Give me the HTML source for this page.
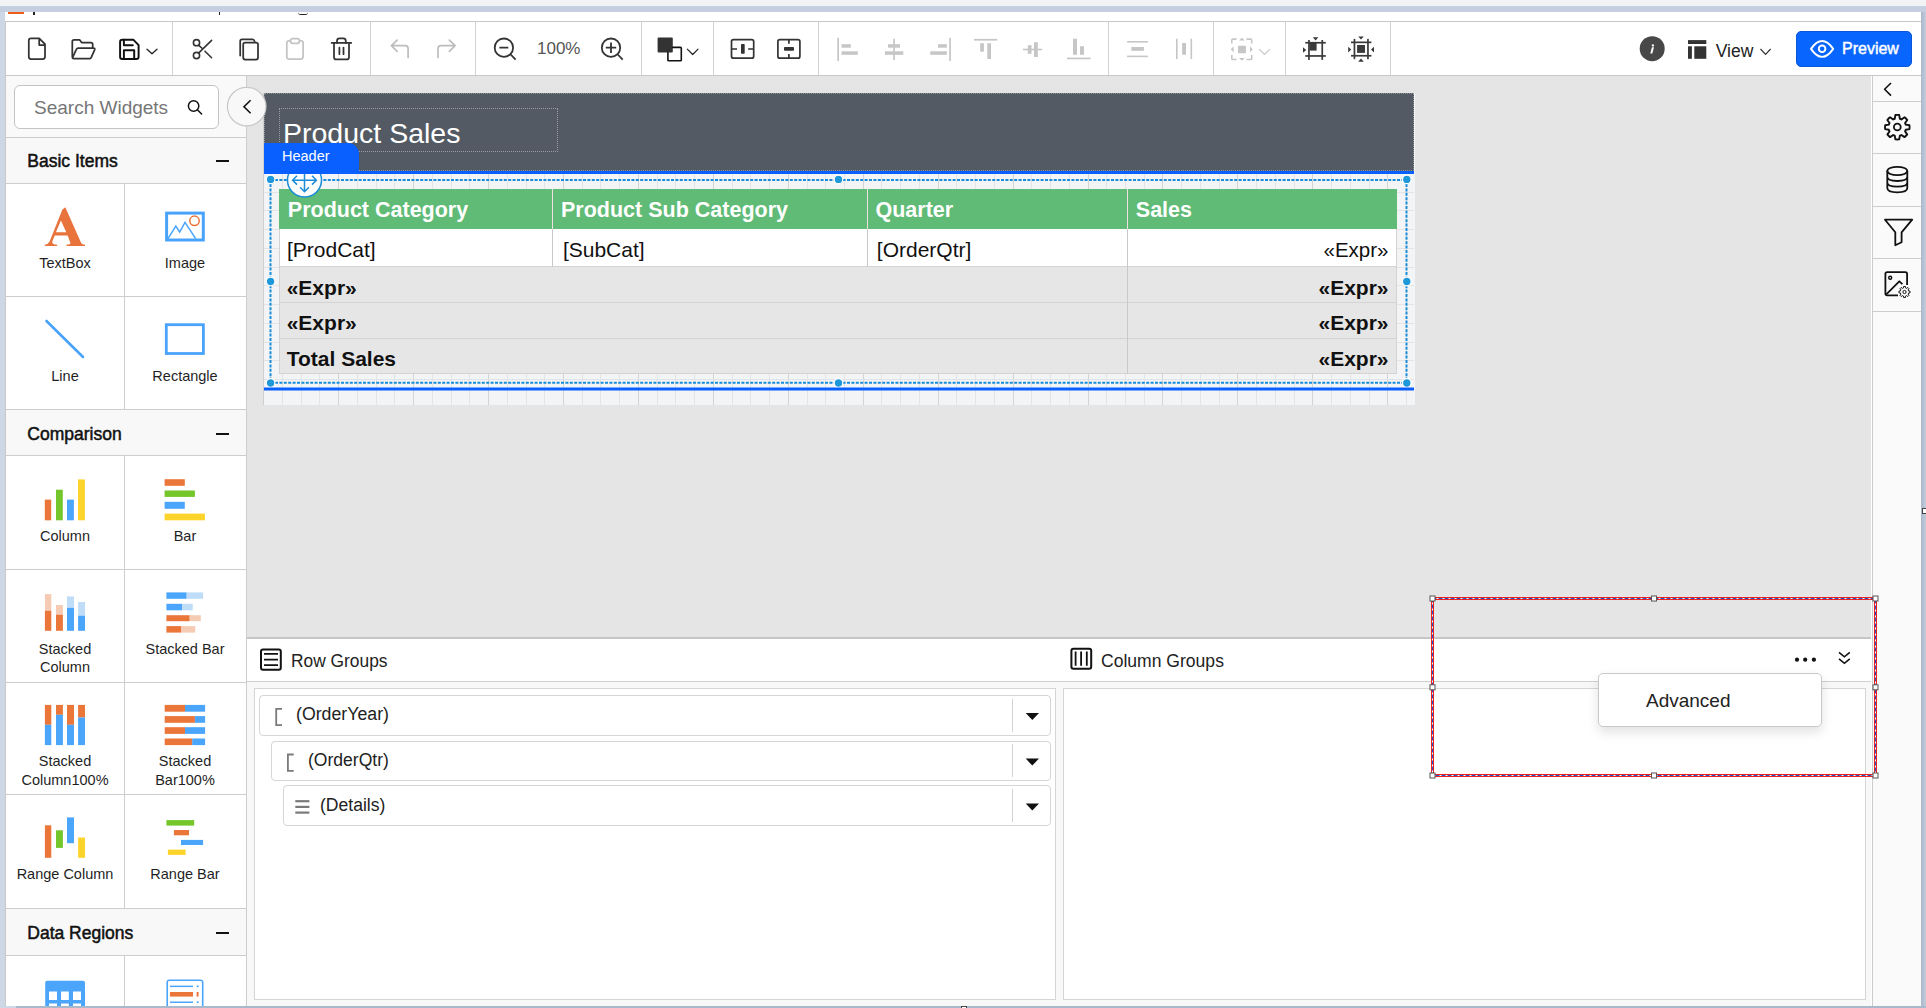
<!DOCTYPE html>
<html><head><meta charset="utf-8">
<style>
*{box-sizing:border-box;margin:0;padding:0}
html,body{width:1926px;height:1008px;overflow:hidden;background:#c4cedd;font-family:"Liberation Sans",sans-serif;color:#222;position:relative}
.a{position:absolute}
svg.o{position:absolute;left:0;top:0;width:1926px;height:1008px;overflow:visible}
.sep{position:absolute;top:22px;width:1px;height:53px;background:#d2d2d2}
.t{position:absolute;white-space:nowrap;line-height:normal}
.lb{position:absolute;white-space:nowrap;line-height:normal;font-size:14.5px;color:#1f1f1f;width:120px;text-align:center}
.sh{position:absolute;left:6px;width:240px;background:#f8f8f8;border-bottom:1px solid #cdcdcd}
.sht{position:absolute;left:27.3px;font-size:17.5px;font-weight:400;-webkit-text-stroke:0.5px #111;color:#111;white-space:nowrap;line-height:normal}
.mn{position:absolute;left:216px;width:13px;height:2px;background:#111}
</style></head><body>
<!-- top strip & app area -->
<div class="a" style="left:0;top:0;width:1926px;height:6px;background:#f2f3f5"></div>
<div class="a" style="left:0;top:6px;width:1926px;height:6px;background:#c5cfdf"></div>
<div class="a" style="left:0;top:12px;width:5px;height:996px;background:#cdd7e5"></div>
<div class="a" style="left:5px;top:12px;width:1916px;height:994px;background:#fff"></div>
<!-- cut-off title bar marks -->
<div class="a" style="left:8px;top:12px;width:16px;height:1.5px;background:#f05a1a"></div>
<div class="a" style="left:33px;top:12px;width:1.5px;height:3px;background:#222"></div>
<div class="a" style="left:218.5px;top:12px;width:1.5px;height:3px;background:#222"></div>
<div class="a" style="left:298px;top:12px;width:10px;height:3px;border-bottom:1.5px solid #222;border-radius:0 0 6px 6px"></div>

<!-- TOOLBAR -->
<div class="a" style="left:5px;top:21px;width:1916px;height:55px;background:#fff;border-top:1px solid #c8c8c8;border-bottom:1px solid #c8c8c8;border-left:1px solid #c8c8c8"></div>
<div class="sep" style="left:172px"></div>
<div class="sep" style="left:370px"></div>
<div class="sep" style="left:475px"></div>
<div class="sep" style="left:641px"></div>
<div class="sep" style="left:713px"></div>
<div class="sep" style="left:818px"></div>
<div class="sep" style="left:1108px"></div>
<div class="sep" style="left:1213px"></div>
<div class="sep" style="left:1285px"></div>
<div class="sep" style="left:1390px"></div>
<div class="t" style="left:537px;top:38.9px;font-size:17px;color:#555">100%</div>
<div class="t" style="left:1715.7px;top:41.4px;font-size:17.5px;color:#222">View</div>
<div class="a" style="left:1796px;top:31px;width:116px;height:35.5px;background:#0866ff;border:1px solid #0a55d8;border-radius:5px"></div>
<div class="t" style="left:1842px;top:40.3px;font-size:16px;color:#fff;-webkit-text-stroke:0.45px #fff">Preview</div>
<svg class="o" fill="none" stroke="#333" stroke-width="1.75" stroke-linecap="round" stroke-linejoin="round">
 <!-- new -->
 <path d="M31 38.3H39.2L45 44.2V56.8Q45 59 42.8 59H31Q28.8 59 28.8 56.8V40.5Q28.8 38.3 31 38.3Z M39.2 38.3V45H45"/>
 <!-- open -->
 <path d="M72.3 56.8V41.6Q72.3 39.8 74.1 39.8H79.6L81.6 42.6H90.9Q92.7 42.6 92.7 44.4V48.1"/>
 <path d="M72.6 57.6L76.2 49.6Q76.8 48.1 78.3 48.1H93.3Q95.3 48.1 94.6 49.9L91.3 57.3Q90.7 58.7 89.2 58.7H73.9Q72.1 58.7 72.6 57.6Z"/>
 <!-- save -->
 <g stroke="#111" stroke-width="1.95">
 <path d="M122.3 39.8H133.5L138.6 45.2V56.7Q138.6 58.9 136.4 58.9H122.3Q120.1 58.9 120.1 56.7V42Q120.1 39.8 122.3 39.8Z"/>
 <path d="M123.9 39.8V45.3H132.8 M123.9 58.9V50.3H134.2V58.9"/>
 </g>
 <path d="M147 49.3L152 53.8L157 49.3" stroke="#222" stroke-width="1.3"/>
 <!-- cut -->
 <circle cx="196.5" cy="42.7" r="3.1" stroke-width="1.6"/>
 <circle cx="196.5" cy="55.5" r="3.1" stroke-width="1.6"/>
 <path d="M198.8 52.9L211.6 40.4 M198.8 45.3L202.3 48.5 M205 51.2L211.6 57.7" stroke-width="1.6"/>
 <!-- copy -->
 <path d="M240.2 55.5V41.2Q240.2 39.4 242 39.4H252.5Q254.2 39.4 254.6 41.4"/>
 <rect x="243.2" y="42.6" width="14.8" height="17" rx="2"/>
 <!-- paste (disabled) -->
 <g stroke="#c4c4c4">
 <path d="M290 40.8H289Q286.8 40.8 286.8 43V56.8Q286.8 59 289 59H300.9Q303.1 59 303.1 56.8V43Q303.1 40.8 300.9 40.8H300"/>
 <rect x="290.6" y="38.5" width="8.8" height="4.8" rx="2"/>
 </g>
 <!-- delete -->
 <path d="M331.7 42.9H351.2" stroke-width="1.9"/>
 <path d="M337 42.9V41Q337 38.4 339.6 38.4H343.2Q345.8 38.4 345.8 41V42.9"/>
 <path d="M334 43V57.2Q334 59.4 336.2 59.4H346.8Q349 59.4 349 57.2V43"/>
 <path d="M339.4 47.6V54.2 M343.5 47.6V54.2"/>
 <!-- undo/redo disabled -->
 <g stroke="#bdbdbd" stroke-width="1.7">
 <path d="M397.1 40.1L391.4 45.7L397.1 51.3 M391.6 45.7H405Q408.1 45.7 408.1 48.8V57.5"/>
 <path d="M449.4 40.1L455.1 45.7L449.4 51.3 M454.9 45.7H441.1Q438 45.7 438 48.8V57.5"/>
 </g>
 <!-- zoom out / in -->
 <circle cx="503.9" cy="47.7" r="9.2" stroke-width="1.8"/>
 <path d="M510.7 54.5L515.6 59.6 M499.4 47.7H508.3" stroke-width="1.8" stroke-linecap="butt"/>
 <circle cx="611" cy="47.7" r="9.2" stroke-width="1.8"/>
 <path d="M617.8 54.5L622.7 59.6 M605.8 47.7H616.2 M611 42.5V52.9" stroke-width="1.8" stroke-linecap="butt"/>
 <!-- colors -->
 <rect x="657.6" y="37.6" width="15.2" height="14.8" rx="1" fill="#333" stroke="none"/>
 <path d="M672.8 47.4H680.5Q681.3 47.4 681.3 48.2V60Q681.3 60.8 680.5 60.8H668.7Q667.9 60.8 667.9 60V52.4" stroke="#111" stroke-width="1.6"/>
 <path d="M687.3 49.1L692.7 54.5L698 49.1" stroke="#222" stroke-width="1.2"/>
 <!-- insert column/row -->
 <rect x="731.5" y="39.6" width="22.2" height="18.6" rx="2" stroke-width="1.7"/>
 <path d="M731.5 49H737 M748.2 49H753.7" stroke-width="1.7" stroke-linecap="butt"/>
 <rect x="741" y="44" width="3.7" height="9.7" rx="0.8" fill="#333" stroke="none"/>
 <rect x="777.9" y="39.6" width="22" height="18.6" rx="2" stroke-width="1.7"/>
 <path d="M788.9 39.6V43.8 M788.9 54V58.2" stroke-width="1.7" stroke-linecap="butt"/>
 <rect x="784" y="47" width="10" height="3.8" rx="0.8" fill="#333" stroke="none"/>
</svg>
<!-- align icons (disabled) -->
<svg class="o" fill="#c6c6c6" stroke="none">
 <rect x="837.3" y="37.8" width="1.7" height="23.2"/><rect x="841.5" y="44.2" width="9.3" height="3.5"/><rect x="841.5" y="51.3" width="16.3" height="3.5"/>
 <rect x="893.2" y="38.8" width="1.7" height="21.2"/><rect x="888" y="44.2" width="12" height="3.5"/><rect x="885" y="51.3" width="18.3" height="3.5"/>
 <rect x="949.2" y="37.8" width="1.7" height="23.2"/><rect x="938" y="44.2" width="8.8" height="3.5"/><rect x="930.3" y="51.3" width="16.5" height="3.5"/>
 <rect x="974" y="38.9" width="23.3" height="1.7"/><rect x="980.2" y="43.2" width="3.7" height="8.5"/><rect x="987.3" y="43.2" width="3.7" height="15.8"/>
 <rect x="1023" y="48.7" width="19" height="1.6"/><rect x="1027.8" y="45.2" width="3.7" height="8.6"/><rect x="1034" y="42.2" width="3.8" height="14.8"/>
 <rect x="1067" y="57.6" width="23.6" height="1.7"/><rect x="1073" y="38.8" width="4" height="16"/><rect x="1080" y="46.2" width="4" height="8.6"/>
 <rect x="1127.1" y="41" width="20.8" height="1.6"/><rect x="1131.3" y="47" width="12.6" height="3.8"/><rect x="1127.1" y="55.6" width="20.8" height="1.6"/>
 <rect x="1176" y="38.7" width="1.6" height="20.3"/><rect x="1182.1" y="43" width="3.9" height="11.7"/><rect x="1190.5" y="38.7" width="1.6" height="20.3"/>
 <!-- select -->
 <path d="M1231.8 43.5V40.2Q1231.8 39.1 1232.9 39.1H1236.5 M1246.5 39.1H1250.6Q1251.7 39.1 1251.7 40.2V43.5 M1251.7 55V58.4Q1251.7 59.5 1250.6 59.5H1246.5 M1236.5 59.5H1232.9Q1231.8 59.5 1231.8 58.4V55" fill="none" stroke="#c6c6c6" stroke-width="1.6"/>
 <rect x="1238" y="45.8" width="7.9" height="7.5" rx="0.5"/>
 <path d="M1239 40.5L1241.9 37.8L1244.8 40.5Z M1239 58L1241.9 60.7L1244.8 58Z M1233.6 46.2L1230.8 49.3L1233.6 52.4Z M1250 46.2L1252.8 49.3L1250 52.4Z"/>
 <path d="M1259.2 49.1L1264.5 54.5L1270 49.1" fill="none" stroke="#c6c6c6" stroke-width="1.2"/>
</svg>
<!-- fit icons -->
<svg class="o" fill="#3a3a3a" stroke="none">
 <rect x="1305.3" y="41.9" width="20.5" height="1.7"/><rect x="1305.3" y="55.1" width="20.5" height="1.7"/>
 <rect x="1308.1" y="40" width="1.7" height="19.9"/><rect x="1321.4" y="40" width="1.7" height="19.9"/>
 <rect x="1309.5" y="43" width="7.1" height="7.6"/>
 <path d="M1312.8 37.3H1318.4L1315.6 40.6Z M1303 47.3V52.8L1306.2 50Z"/>
 <rect x="1351" y="41.5" width="20.4" height="1.7"/><rect x="1351" y="54.9" width="20.4" height="1.7"/>
 <rect x="1353.6" y="38.9" width="1.7" height="20.3"/><rect x="1367.1" y="38.9" width="1.7" height="20.3"/>
 <rect x="1357.1" y="45" width="7.9" height="7.9"/>
 <path d="M1358.2 36.4H1363.8L1361 39.6Z M1358.2 61.8H1363.8L1361 58.6Z M1348.2 46.8V52.4L1351.2 49.6Z M1374 46.8V52.4L1371 49.6Z"/>
</svg>
<!-- info / view / preview icons -->
<svg class="o">
 <circle cx="1652.2" cy="48.7" r="12.5" fill="#484848"/>
 <path d="M1652.9 44.2a1.2 1.2 0 1 0 0.01 0Z" fill="#fff"/>
 <path d="M1651.9 47.3H1654L1652.3 53.6H1650.3Z" fill="#fff"/>
 <rect x="1688" y="40.1" width="18.3" height="3.9" fill="#333"/>
 <rect x="1688" y="46.3" width="3.9" height="12.5" fill="#333"/>
 <rect x="1694.3" y="46.3" width="12" height="12.5" fill="#333"/>
 <path d="M1760.5 49L1765.6 54.3L1770.6 49" fill="none" stroke="#333" stroke-width="1.2"/>
 <path d="M1811 48.9Q1816.5 41 1822.1 41Q1827.7 41 1833.2 48.9Q1827.7 56.9 1822.1 56.9Q1816.5 56.9 1811 48.9Z" fill="none" stroke="#fff" stroke-width="1.9" stroke-linejoin="round"/>
 <circle cx="1822.1" cy="48.8" r="3.3" fill="none" stroke="#fff" stroke-width="1.9"/>
</svg>
<!-- LEFT PANEL -->
<div class="a" style="left:5px;top:76px;width:242px;height:930px;background:#f9f9f9;border-left:1px solid #c8c8c8;border-right:1px solid #cdcdcd"></div>
<div class="a" style="left:14px;top:84.5px;width:204.5px;height:44px;background:#fff;border:1px solid #c4c4c4;border-radius:6px"></div>
<div class="t" style="left:34px;top:96.8px;font-size:19px;color:#767676">Search Widgets</div>
<svg class="o" fill="none" stroke="#111" stroke-width="1.5">
 <circle cx="193.6" cy="106" r="5.2"/>
 <path d="M197.4 109.8L201.6 114" stroke-linecap="round"/>
</svg>
<div class="a" style="left:6px;top:137px;width:240px;height:1px;background:#cdcdcd"></div>
<!-- Basic items -->
<div class="sh" style="top:138px;height:46px"></div>
<div class="sht" style="top:151px">Basic Items</div>
<div class="mn" style="top:160px"></div>
<div class="a" style="left:6px;top:184px;width:240px;height:225px;background:#fff"></div>
<div class="a" style="left:124px;top:184px;width:1px;height:225px;background:#cdcdcd"></div>
<div class="a" style="left:6px;top:296px;width:240px;height:1px;background:#cdcdcd"></div>
<!-- Comparison -->
<div class="sh" style="top:409px;height:47px;border-top:1px solid #cdcdcd"></div>
<div class="sht" style="top:423.8px">Comparison</div>
<div class="mn" style="top:433px"></div>
<div class="a" style="left:6px;top:456px;width:240px;height:452px;background:#fff"></div>
<div class="a" style="left:124px;top:456px;width:1px;height:452px;background:#cdcdcd"></div>
<div class="a" style="left:6px;top:569px;width:240px;height:1px;background:#cdcdcd"></div>
<div class="a" style="left:6px;top:682px;width:240px;height:1px;background:#cdcdcd"></div>
<div class="a" style="left:6px;top:794px;width:240px;height:1px;background:#cdcdcd"></div>
<!-- Data Regions -->
<div class="sh" style="top:908px;height:48px;border-top:1px solid #cdcdcd"></div>
<div class="sht" style="top:922.5px">Data Regions</div>
<div class="mn" style="top:931.5px"></div>
<div class="a" style="left:6px;top:956px;width:240px;height:50px;background:#fff"></div>
<div class="a" style="left:124px;top:956px;width:1px;height:50px;background:#cdcdcd"></div>
<!-- labels -->
<div class="lb" style="left:5px;top:254.7px">TextBox</div>
<div class="lb" style="left:125px;top:254.7px">Image</div>
<div class="lb" style="left:5px;top:367.7px">Line</div>
<div class="lb" style="left:125px;top:367.7px">Rectangle</div>
<div class="lb" style="left:5px;top:528.1px">Column</div>
<div class="lb" style="left:125px;top:528.1px">Bar</div>
<div class="lb" style="left:5px;top:640.8px">Stacked</div>
<div class="lb" style="left:5px;top:659.2px">Column</div>
<div class="lb" style="left:125px;top:640.8px">Stacked Bar</div>
<div class="lb" style="left:5px;top:752.8px">Stacked</div>
<div class="lb" style="left:5px;top:771.7px">Column100%</div>
<div class="lb" style="left:125px;top:752.8px">Stacked</div>
<div class="lb" style="left:125px;top:771.7px">Bar100%</div>
<div class="lb" style="left:5px;top:865.8px">Range Column</div>
<div class="lb" style="left:125px;top:865.8px">Range Bar</div>
<!-- widget icons -->
<svg class="o" stroke="none">
 <!-- A -->
 <path fill="#e8743b" fill-rule="evenodd" d="M62.4 209.6L65.3 207.3L81.2 243.1Q82.2 244.6 85 244.8V246.1H66.5V244.8Q70.7 244.6 70.4 243L67.7 235.4H54.8L52.4 241.3Q51.4 244.5 57.1 244.8V246.1H44.8V244.8Q48.1 244.5 49.6 241.6Z M60.9 220.4L55.9 232.2H66.3Z"/>
 <!-- image -->
 <rect x="166.6" y="213.1" width="36.7" height="26.9" fill="none" stroke="#4aa3fb" stroke-width="3"/>
 <path d="M167.8 238.9L175.8 226.1L179.7 232L185 222.4L195.7 238.6" fill="none" stroke="#4aa3fb" stroke-width="1.5"/>
 <circle cx="194.5" cy="220.8" r="4.7" fill="none" stroke="#e8743b" stroke-width="1.5"/>
 <!-- line -->
 <path d="M46.5 321L83 357" stroke="#4aa3fb" stroke-width="2.6" stroke-linecap="round"/>
 <!-- rectangle -->
 <rect x="166.3" y="324.7" width="37.1" height="28.8" fill="none" stroke="#4aa3fb" stroke-width="2.8"/>
 <!-- column -->
 <rect x="44.8" y="499.6" width="6.4" height="20.7" fill="#ea7639"/>
 <rect x="56" y="489.7" width="6.8" height="30.6" fill="#74c62b"/>
 <rect x="67" y="499.6" width="6.9" height="20.7" fill="#4ba5fb"/>
 <rect x="78" y="479.4" width="6.9" height="40.9" fill="#fdd42c"/>
 <!-- bar -->
 <rect x="164.6" y="479.2" width="20.2" height="6.6" fill="#ea7639"/>
 <rect x="164.6" y="490.5" width="30.3" height="6.4" fill="#74c62b"/>
 <rect x="164.6" y="501.8" width="20.2" height="7" fill="#4ba5fb"/>
 <rect x="164.6" y="513.6" width="40.3" height="6.7" fill="#fdd42c"/>
 <!-- stacked column -->
 <rect x="44.9" y="594.1" width="6.4" height="16.7" fill="#f6cbb3"/><rect x="44.9" y="610.8" width="6.4" height="20" fill="#ea7639"/>
 <rect x="56" y="605" width="6.9" height="9.7" fill="#f6cbb3"/><rect x="56" y="614.7" width="6.9" height="16.1" fill="#ea7639"/>
 <rect x="67" y="596.4" width="7" height="11.4" fill="#bfdcf8"/><rect x="67" y="607.8" width="7" height="23" fill="#4ba5fb"/>
 <rect x="78.1" y="602" width="6.9" height="13.7" fill="#bfdcf8"/><rect x="78.1" y="615.7" width="6.9" height="15.1" fill="#4ba5fb"/>
 <!-- stacked bar -->
 <rect x="166.4" y="592.4" width="20.3" height="6.4" fill="#4ba5fb"/><rect x="186.7" y="592.4" width="16.4" height="6.4" fill="#bfdcf8"/>
 <rect x="166.4" y="603.8" width="15.9" height="6.5" fill="#4ba5fb"/><rect x="182.3" y="603.8" width="10.4" height="6.5" fill="#bfdcf8"/>
 <rect x="166.4" y="615.2" width="23.3" height="6" fill="#ea7639"/><rect x="189.7" y="615.2" width="11.1" height="6" fill="#f6cbb3"/>
 <rect x="166.4" y="626.1" width="14.6" height="6.5" fill="#ea7639"/><rect x="181" y="626.1" width="14.2" height="6.5" fill="#f6cbb3"/>
 <!-- stacked column 100 -->
 <rect x="44.9" y="704.9" width="6.4" height="19.9" fill="#ea7639"/><rect x="44.9" y="724.8" width="6.4" height="20.3" fill="#4ba5fb"/>
 <rect x="56" y="704.9" width="6.9" height="9.9" fill="#ea7639"/><rect x="56" y="714.8" width="6.9" height="30.3" fill="#4ba5fb"/>
 <rect x="67" y="704.9" width="7" height="19.9" fill="#ea7639"/><rect x="67" y="724.8" width="7" height="20.3" fill="#4ba5fb"/>
 <rect x="78.1" y="704.9" width="6.9" height="12.6" fill="#ea7639"/><rect x="78.1" y="717.5" width="6.9" height="27.6" fill="#4ba5fb"/>
 <!-- stacked bar 100 -->
 <rect x="164.7" y="704.9" width="20.3" height="6.8" fill="#ea7639"/><rect x="185" y="704.9" width="20.1" height="6.8" fill="#4ba5fb"/>
 <rect x="164.7" y="716.1" width="30.2" height="6.7" fill="#ea7639"/><rect x="194.9" y="716.1" width="10.2" height="6.7" fill="#4ba5fb"/>
 <rect x="164.7" y="727.2" width="20.3" height="6.7" fill="#ea7639"/><rect x="185" y="727.2" width="20.1" height="6.7" fill="#4ba5fb"/>
 <rect x="164.7" y="738.5" width="27.5" height="6.6" fill="#ea7639"/><rect x="192.2" y="738.5" width="12.9" height="6.6" fill="#4ba5fb"/>
 <!-- range column -->
 <rect x="44.9" y="825.3" width="6.4" height="32.5" fill="#ea7639"/>
 <rect x="56" y="830.3" width="6.9" height="17.6" fill="#74c62b"/>
 <rect x="67" y="817.4" width="7" height="25.8" fill="#4ba5fb"/>
 <rect x="78.1" y="837.5" width="6.9" height="20.3" fill="#fdd42c"/>
 <!-- range bar -->
 <rect x="166.4" y="820.1" width="27.8" height="5.5" fill="#74c62b"/>
 <rect x="173.9" y="830" width="15.1" height="5.3" fill="#ea7639"/>
 <rect x="181" y="839.9" width="22.1" height="5.1" fill="#4ba5fb"/>
 <rect x="167.9" y="849.6" width="17.7" height="5.3" fill="#fdd42c"/>
 <!-- table icon -->
 <path d="M47.2 980.7H83Q85 980.7 85 982.7V1010H45.2V982.7Q45.2 980.7 47.2 980.7Z" fill="#4ba5fb"/>
 <rect x="49" y="991.5" width="8" height="8.5" fill="#fff"/><rect x="61" y="991.5" width="7.8" height="8.5" fill="#fff"/><rect x="73" y="991.5" width="8" height="8.5" fill="#fff"/>
 <rect x="49" y="1003.5" width="8" height="8" fill="#fff"/><rect x="61" y="1003.5" width="7.8" height="8" fill="#fff"/><rect x="73" y="1003.5" width="8" height="8" fill="#fff"/>
 <!-- list icon -->
 <path d="M167.2 1012V982.5Q167.2 980.3 169.4 980.3H200.5Q202.7 980.3 202.7 982.5V1012" fill="none" stroke="#4ba5fb" stroke-width="1.6"/>
 <rect x="170" y="985.6" width="23" height="1.5" fill="#4ba5fb"/><rect x="196.8" y="985.4" width="1.8" height="1.8" fill="#4ba5fb"/>
 <rect x="170" y="992" width="23" height="4.6" fill="#ea7639"/><rect x="196.6" y="992" width="2" height="4.6" fill="#ea7639"/>
 <rect x="170" y="1001.5" width="23" height="1.5" fill="#4ba5fb"/><rect x="196.8" y="1001.3" width="1.8" height="1.8" fill="#4ba5fb"/>
</svg>
<!-- CANVAS -->
<div class="a" style="left:247px;top:76px;width:1624px;height:561px;background:#e5e5e5"></div>
<div class="a" style="left:263px;top:93px;width:1152px;height:312px;background:#f3f4f6;border-left:1px solid #cfcfcf"></div>
<svg class="o" stroke="none"><rect x="282" y="173" width="1" height="232" fill="#e4e4e6"/><rect x="301" y="173" width="1" height="232" fill="#e4e4e6"/><rect x="319" y="173" width="1" height="232" fill="#e4e4e6"/><rect x="338" y="173" width="1" height="232" fill="#d4d4d4"/><rect x="357" y="173" width="1" height="232" fill="#e4e4e6"/><rect x="376" y="173" width="1" height="232" fill="#e4e4e6"/><rect x="394" y="173" width="1" height="232" fill="#e4e4e6"/><rect x="413" y="173" width="1" height="232" fill="#d4d4d4"/><rect x="432" y="173" width="1" height="232" fill="#e4e4e6"/><rect x="451" y="173" width="1" height="232" fill="#e4e4e6"/><rect x="469" y="173" width="1" height="232" fill="#e4e4e6"/><rect x="488" y="173" width="1" height="232" fill="#d4d4d4"/><rect x="507" y="173" width="1" height="232" fill="#e4e4e6"/><rect x="526" y="173" width="1" height="232" fill="#e4e4e6"/><rect x="544" y="173" width="1" height="232" fill="#e4e4e6"/><rect x="563" y="173" width="1" height="232" fill="#d4d4d4"/><rect x="582" y="173" width="1" height="232" fill="#e4e4e6"/><rect x="600" y="173" width="1" height="232" fill="#e4e4e6"/><rect x="619" y="173" width="1" height="232" fill="#e4e4e6"/><rect x="638" y="173" width="1" height="232" fill="#d4d4d4"/><rect x="657" y="173" width="1" height="232" fill="#e4e4e6"/><rect x="675" y="173" width="1" height="232" fill="#e4e4e6"/><rect x="694" y="173" width="1" height="232" fill="#e4e4e6"/><rect x="713" y="173" width="1" height="232" fill="#d4d4d4"/><rect x="732" y="173" width="1" height="232" fill="#e4e4e6"/><rect x="750" y="173" width="1" height="232" fill="#e4e4e6"/><rect x="769" y="173" width="1" height="232" fill="#e4e4e6"/><rect x="788" y="173" width="1" height="232" fill="#d4d4d4"/><rect x="807" y="173" width="1" height="232" fill="#e4e4e6"/><rect x="825" y="173" width="1" height="232" fill="#e4e4e6"/><rect x="844" y="173" width="1" height="232" fill="#e4e4e6"/><rect x="863" y="173" width="1" height="232" fill="#d4d4d4"/><rect x="881" y="173" width="1" height="232" fill="#e4e4e6"/><rect x="900" y="173" width="1" height="232" fill="#e4e4e6"/><rect x="919" y="173" width="1" height="232" fill="#e4e4e6"/><rect x="938" y="173" width="1" height="232" fill="#d4d4d4"/><rect x="956" y="173" width="1" height="232" fill="#e4e4e6"/><rect x="975" y="173" width="1" height="232" fill="#e4e4e6"/><rect x="994" y="173" width="1" height="232" fill="#e4e4e6"/><rect x="1013" y="173" width="1" height="232" fill="#d4d4d4"/><rect x="1031" y="173" width="1" height="232" fill="#e4e4e6"/><rect x="1050" y="173" width="1" height="232" fill="#e4e4e6"/><rect x="1069" y="173" width="1" height="232" fill="#e4e4e6"/><rect x="1088" y="173" width="1" height="232" fill="#d4d4d4"/><rect x="1106" y="173" width="1" height="232" fill="#e4e4e6"/><rect x="1125" y="173" width="1" height="232" fill="#e4e4e6"/><rect x="1144" y="173" width="1" height="232" fill="#e4e4e6"/><rect x="1162" y="173" width="1" height="232" fill="#d4d4d4"/><rect x="1181" y="173" width="1" height="232" fill="#e4e4e6"/><rect x="1200" y="173" width="1" height="232" fill="#e4e4e6"/><rect x="1219" y="173" width="1" height="232" fill="#e4e4e6"/><rect x="1237" y="173" width="1" height="232" fill="#d4d4d4"/><rect x="1256" y="173" width="1" height="232" fill="#e4e4e6"/><rect x="1275" y="173" width="1" height="232" fill="#e4e4e6"/><rect x="1294" y="173" width="1" height="232" fill="#e4e4e6"/><rect x="1312" y="173" width="1" height="232" fill="#d4d4d4"/><rect x="1331" y="173" width="1" height="232" fill="#e4e4e6"/><rect x="1350" y="173" width="1" height="232" fill="#e4e4e6"/><rect x="1369" y="173" width="1" height="232" fill="#e4e4e6"/><rect x="1387" y="173" width="1" height="232" fill="#d4d4d4"/><rect x="1406" y="173" width="1" height="232" fill="#e4e4e6"/><rect x="264" y="192" width="1150" height="1" fill="#e4e4e6"/><rect x="264" y="210" width="1150" height="1" fill="#e4e4e6"/><rect x="264" y="229" width="1150" height="1" fill="#e4e4e6"/><rect x="264" y="248" width="1150" height="1" fill="#e4e4e6"/><rect x="264" y="267" width="1150" height="1" fill="#e4e4e6"/><rect x="264" y="285" width="1150" height="1" fill="#e4e4e6"/><rect x="264" y="304" width="1150" height="1" fill="#e4e4e6"/><rect x="264" y="323" width="1150" height="1" fill="#e4e4e6"/><rect x="264" y="342" width="1150" height="1" fill="#e4e4e6"/><rect x="264" y="360" width="1150" height="1" fill="#e4e4e6"/><rect x="264" y="379" width="1150" height="1" fill="#e4e4e6"/></svg>
<div class="a" style="left:264px;top:93px;width:1150px;height:78px;background:#545a63;border:1px dotted #8d9197"></div>
<div class="a" style="left:279px;top:108px;width:279px;height:44px;border:1px dotted #9a9ea4"></div>
<div class="t" style="left:283px;top:117.2px;font-size:28.5px;color:#fff">Product Sales</div>
<div class="a" style="left:279px;top:189px;width:1118px;height:185px;background:#e6e6e6;border:1px solid #d3d3d3;border-top:none"></div>
<div class="a" style="left:279px;top:189px;width:1118px;height:40px;background:#5fbb76"></div>
<div class="a" style="left:279px;top:229px;width:1118px;height:38px;background:#fff;border-left:1px solid #d3d3d3;border-right:1px solid #d3d3d3"></div>
<div class="a" style="left:280px;top:266px;width:1117px;height:1px;background:#d3d3d3"></div>
<div class="a" style="left:280px;top:302px;width:1117px;height:1px;background:#d3d3d3"></div>
<div class="a" style="left:280px;top:338px;width:1117px;height:1px;background:#d3d3d3"></div>
<div class="a" style="left:552px;top:229px;width:1px;height:38px;background:#c9c9c9"></div>
<div class="a" style="left:867px;top:229px;width:1px;height:38px;background:#c9c9c9"></div>
<div class="a" style="left:1127px;top:229px;width:1px;height:145px;background:#c9c9c9"></div>
<div class="a" style="left:552px;top:189px;width:1px;height:40px;background:#f1dede"></div>
<div class="a" style="left:867px;top:189px;width:1px;height:40px;background:#f1dede"></div>
<div class="a" style="left:1127px;top:189px;width:1px;height:40px;background:#f1dede"></div>
<div class="t" style="left:287.8px;top:197.8px;font-size:21.5px;font-weight:700;color:#fff">Product Category</div>
<div class="t" style="left:561px;top:197.8px;font-size:21.5px;font-weight:700;color:#fff">Product Sub Category</div>
<div class="t" style="left:875.5px;top:197.8px;font-size:21.5px;font-weight:700;color:#fff">Quarter</div>
<div class="t" style="left:1135.8px;top:197.8px;font-size:21.5px;font-weight:700;color:#fff">Sales</div>
<div class="t" style="left:287px;top:237.8px;font-size:21px;color:#111">[ProdCat]</div>
<div class="t" style="left:562.9px;top:237.8px;font-size:21px;color:#111">[SubCat]</div>
<div class="t" style="left:876.8px;top:237.8px;font-size:21px;color:#111">[OrderQtr]</div>
<div class="t" style="right:537.5px;top:238.3px;font-size:20.5px;color:#111">&laquo;Expr&raquo;</div>
<div class="t" style="left:286.7px;top:275.6px;font-size:21px;font-weight:700;color:#111">&laquo;Expr&raquo;</div>
<div class="t" style="left:286.7px;top:311.2px;font-size:21px;font-weight:700;color:#111">&laquo;Expr&raquo;</div>
<div class="t" style="left:286.7px;top:347px;font-size:21px;font-weight:700;color:#111">Total Sales</div>
<div class="t" style="right:537.5px;top:275.6px;font-size:21px;font-weight:700;color:#111">&laquo;Expr&raquo;</div>
<div class="t" style="right:537.5px;top:311.2px;font-size:21px;font-weight:700;color:#111">&laquo;Expr&raquo;</div>
<div class="t" style="right:537.5px;top:347px;font-size:21px;font-weight:700;color:#111">&laquo;Expr&raquo;</div>
<svg class="o" fill="none" stroke="#1a8cd8" stroke-width="2" stroke-dasharray="3 1.4">
 <path d="M275 180H1402 M275 382.8H1402 M270.5 184V378 M1406.5 184V378"/>
</svg>
<svg class="o" fill="#1e98d8" stroke="#fff" stroke-width="1.2">
 <circle cx="270.6" cy="179.4" r="4.3"/><circle cx="838.5" cy="179.4" r="4.3"/><circle cx="1406.8" cy="179.4" r="4.3"/>
 <circle cx="270.6" cy="281.5" r="4.3"/><circle cx="1406.8" cy="281.5" r="4.3"/>
 <circle cx="270.6" cy="383" r="4.3"/><circle cx="838.5" cy="383" r="4.3"/><circle cx="1406.8" cy="383" r="4.3"/>
</svg>
<svg class="o" fill="none" stroke="#1a8cd8" stroke-width="1.5">
 <circle cx="304.5" cy="180" r="17" fill="#fff"/>
 <path d="M292.6 180.3H316.4 M297 175.8L292.6 180.3L297 184.6 M312 175.8L316.4 180.3L312 184.6 M304.5 173V191.8 M300.1 187.3L304.5 191.8L308.9 187.3"/>
</svg>
<div class="a" style="left:264px;top:171px;width:1150px;height:3px;background:#0a5fff"></div>
<div class="a" style="left:264px;top:143px;width:95px;height:31px;background:#0a5fff;border-radius:0 11px 0 0"></div>
<div class="t" style="left:282px;top:147.5px;font-size:14.5px;color:#fff">Header</div>
<svg class="o"><rect x="264" y="387.5" width="1150" height="3" fill="#0a5fff"/></svg>
<svg class="o"><circle cx="246.7" cy="106.6" r="19.3" fill="#f8f8f8" stroke="#c8c8c8" stroke-width="1.2"/>
<path d="M250.6 100.3L244 106.8L250.6 113.2" fill="none" stroke="#111" stroke-width="1.6"/></svg><!-- BOTTOM PANEL -->
<div class="a" style="left:247px;top:637px;width:1624px;height:369px;background:#f8f8f8;border-top:2px solid #c6c6c6"></div>
<div class="a" style="left:247px;top:639px;width:1624px;height:43px;background:#fff;border-bottom:1px solid #cfcfcf"></div>
<div class="a" style="left:254px;top:688px;width:802px;height:312px;background:#fff;border:1.5px solid #d5d5d5"></div>
<div class="a" style="left:1062.5px;top:688px;width:803px;height:312px;background:#fff;border:1.5px solid #d5d5d5"></div>
<svg class="o" fill="none" stroke="#111" stroke-width="2">
 <rect x="261" y="649.4" width="19.8" height="20.4" rx="2"/>
 <path d="M264 653.8H278 M264 659.7H278 M264 665.1H278" stroke-width="1.8"/>
 <rect x="1071.4" y="648.7" width="19.8" height="20" rx="2"/>
 <path d="M1075.6 651.4V665.8 M1081.1 651.4V665.8 M1086.8 651.4V665.8" stroke-width="1.8"/>
</svg>
<div class="t" style="left:290.6px;top:650.6px;font-size:18px;color:#222;transform:scaleX(0.965);transform-origin:0 0">Row Groups</div>
<div class="t" style="left:1100.5px;top:650.6px;font-size:18px;color:#222;transform:scaleX(0.975);transform-origin:0 0">Column Groups</div>
<!-- row items -->
<div class="a" style="left:258.5px;top:694.6px;width:792.5px;height:41px;background:#fff;border:1px solid #d6d6d6;border-radius:4px"></div>
<div class="a" style="left:270.9px;top:740.5px;width:780.1px;height:40px;background:#fff;border:1px solid #d6d6d6;border-radius:4px"></div>
<div class="a" style="left:283px;top:785px;width:768px;height:40.6px;background:#fff;border:1px solid #d6d6d6;border-radius:4px"></div>
<div class="a" style="left:1012px;top:698.6px;width:1px;height:33px;background:#d2d2d2"></div>
<div class="a" style="left:1012px;top:744.3px;width:1px;height:32.5px;background:#d2d2d2"></div>
<div class="a" style="left:1012px;top:789px;width:1px;height:33px;background:#d2d2d2"></div>
<svg class="o" stroke="none" fill="#111">
 <path d="M1025.7 713H1039L1032.3 720Z M1025.7 758.6H1039L1032.3 765.6Z M1025.7 803.5H1039L1032.3 810.5Z"/>
 <path d="M282 708.8H276.2V725.2H282 M293.7 754.5H287.9V770.9H293.7" fill="none" stroke="#7a7a7a" stroke-width="1.8"/>
 <rect x="295.3" y="800.1" width="14.1" height="2.2" fill="#7a7a7a"/><rect x="295.3" y="805.8" width="14.1" height="2.2" fill="#7a7a7a"/><rect x="295.3" y="811.5" width="14.1" height="2.2" fill="#7a7a7a"/>
</svg>
<div class="t" style="left:296px;top:704px;font-size:18px;color:#222;transform:scaleX(0.985);transform-origin:0 0">(OrderYear)</div>
<div class="t" style="left:307.5px;top:749.5px;font-size:18px;color:#222;transform:scaleX(0.975);transform-origin:0 0">(OrderQtr)</div>
<div class="t" style="left:319.6px;top:795px;font-size:18px;color:#222;transform:scaleX(0.975);transform-origin:0 0">(Details)</div>
<!-- ellipsis & collapse -->
<svg class="o" fill="#111" stroke="none">
 <circle cx="1797" cy="659.7" r="2.1"/><circle cx="1805.2" cy="659.7" r="2.1"/><circle cx="1813.9" cy="659.7" r="2.1"/>
 <path d="M1839 652.3L1844.4 656.8L1849.8 652.3 M1839 658.8L1844.4 663.3L1849.8 658.8" fill="none" stroke="#111" stroke-width="1.6"/>
</svg>
<!-- popup -->
<div class="a" style="left:1598.4px;top:673.4px;width:224px;height:54px;background:#fff;border:1px solid #c9c9c9;border-radius:5px;box-shadow:0 5px 12px rgba(0,0,0,0.12)"></div>
<div class="t" style="left:1646px;top:689.6px;font-size:19px;color:#222">Advanced</div>
<!-- RIGHT PANEL -->
<div class="a" style="left:1872px;top:76px;width:49px;height:930px;background:#fafafa;border-left:1px solid #cdcdcd"></div>
<div class="a" style="left:1872px;top:101px;width:49px;height:1px;background:#cdcdcd"></div>
<div class="a" style="left:1872px;top:153px;width:49px;height:1px;background:#cdcdcd"></div>
<div class="a" style="left:1872px;top:206px;width:49px;height:1px;background:#cdcdcd"></div>
<div class="a" style="left:1872px;top:258px;width:49px;height:1px;background:#cdcdcd"></div>
<div class="a" style="left:1872px;top:311px;width:49px;height:1px;background:#cdcdcd"></div>
<svg class="o" fill="none" stroke="#111" stroke-width="1.8" stroke-linejoin="round">
 <path d="M1891 83L1884.6 89.3L1891 95.6" stroke-width="1.6"/>
 <path d="M1894.73 118.78 L1895.38 115.05 A12.3 12.3 0 0 1 1899.22 115.05 L1899.87 118.78 A8.8 8.8 0 0 1 1901.43 119.43 L1904.53 117.25 A12.3 12.3 0 0 1 1907.25 119.97 L1905.07 123.07 A8.8 8.8 0 0 1 1905.72 124.63 L1909.45 125.28 A12.3 12.3 0 0 1 1909.45 129.12 L1905.72 129.77 A8.8 8.8 0 0 1 1905.07 131.33 L1907.25 134.43 A12.3 12.3 0 0 1 1904.53 137.15 L1901.43 134.97 A8.8 8.8 0 0 1 1899.87 135.62 L1899.22 139.35 A12.3 12.3 0 0 1 1895.38 139.35 L1894.73 135.62 A8.8 8.8 0 0 1 1893.17 134.97 L1890.07 137.15 A12.3 12.3 0 0 1 1887.35 134.43 L1889.53 131.33 A8.8 8.8 0 0 1 1888.88 129.77 L1885.15 129.12 A12.3 12.3 0 0 1 1885.15 125.28 L1888.88 124.63 A8.8 8.8 0 0 1 1889.53 123.07 L1887.35 119.97 A12.3 12.3 0 0 1 1890.07 117.25 L1893.17 119.43 A8.8 8.8 0 0 1 1894.73 118.78Z" stroke-width="1.9"/>
 <path d="M1903.48 287.92 L1903.62 286.47 L1905.38 286.47 L1905.52 287.92 L1906.66 288.40 L1907.79 287.47 L1909.03 288.71 L1908.10 289.84 L1908.58 290.98 L1910.03 291.12 L1910.03 292.88 L1908.58 293.02 L1908.10 294.16 L1909.03 295.29 L1907.79 296.53 L1906.66 295.60 L1905.52 296.08 L1905.38 297.53 L1903.62 297.53 L1903.48 296.08 L1902.34 295.60 L1901.21 296.53 L1899.97 295.29 L1900.90 294.16 L1900.42 293.02 L1898.97 292.88 L1898.97 291.12 L1900.42 290.98 L1900.90 289.84 L1899.97 288.71 L1901.21 287.47 L1902.34 288.40Z" stroke-width="1" fill="#fafafa"/>
 <circle cx="1904.5" cy="292" r="1.6" stroke-width="1"/>
 <circle cx="1897.3" cy="127" r="3.4"/>
 <ellipse cx="1897.3" cy="171" rx="10" ry="4.2"/>
 <path d="M1887.3 171V188Q1887.3 192.3 1897.3 192.3Q1907.3 192.3 1907.3 188V171 M1887.3 176.8Q1887.3 181 1897.3 181Q1907.3 181 1907.3 176.8 M1887.3 182.5Q1887.3 186.7 1897.3 186.7Q1907.3 186.7 1907.3 182.5"/>
 <path d="M1885 219.7H1912.2L1901.6 232.3V242.2L1895.3 245.2V232.3Z"/>
 <path d="M1898 295.3H1887.2Q1885.4 295.3 1885.4 293.5V274Q1885.4 272.2 1887.2 272.2H1905.3Q1907.1 272.2 1907.1 274V285"/>
 <circle cx="1890.2" cy="277.7" r="1.5" stroke-width="1.4"/>
 <path d="M1886.3 294.3L1899.3 281.3L1902.4 284.2" stroke-width="1.8"/>
</svg>

<!-- red selection -->
<svg class="o" fill="none">
 <rect x="1432.5" y="598.5" width="443" height="177" stroke="#f02020" stroke-width="3"/>
 <rect x="1432.5" y="598.5" width="443" height="177" stroke="#fff" stroke-width="1"/>
 <rect x="1432.5" y="598.5" width="443" height="177" stroke="#1d55c8" stroke-width="1" stroke-dasharray="4 2"/>
</svg>
<svg class="o" fill="#fff" stroke="#555" stroke-width="1">
 <rect x="1430" y="596" width="5" height="5"/><rect x="1651.5" y="596" width="5" height="5"/><rect x="1873" y="596" width="5" height="5"/>
 <rect x="1430" y="684.8" width="5" height="5"/><rect x="1873" y="684.8" width="5" height="5"/>
 <rect x="1430" y="773" width="5" height="5"/><rect x="1651.5" y="773" width="5" height="5"/><rect x="1873" y="773" width="5" height="5"/>
</svg>

<!-- frame overlays -->
<div class="a" style="left:0;top:1006px;width:16px;height:2px;background:#cdd7e5"></div>
<div class="a" style="left:1921px;top:12px;width:5px;height:996px;background:linear-gradient(90deg,#a9b7cb,#c3cddb)"></div>
<div class="a" style="left:16px;top:1006px;width:1910px;height:2px;background:#aab8cb"></div>
<div class="a" style="left:1921.5px;top:507.5px;width:6px;height:6px;background:#fff;border:1.5px solid #444"></div>
<div class="a" style="left:961px;top:1006px;width:6px;height:6px;background:#fff;border:1.5px solid #444"></div>
</body></html>
